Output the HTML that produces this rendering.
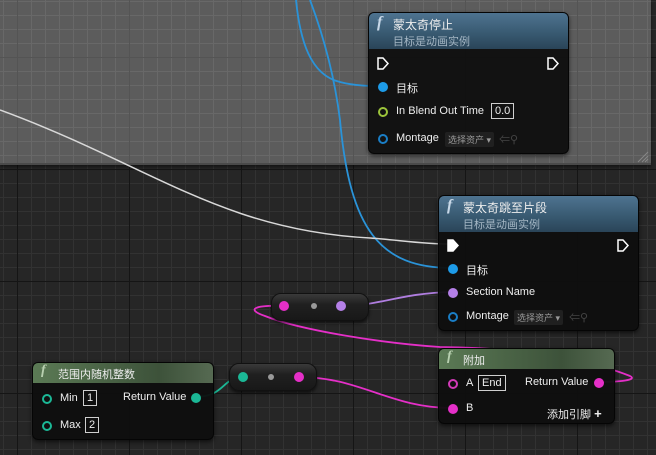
<!DOCTYPE html>
<html><head><meta charset="utf-8"><style>
*{margin:0;padding:0;box-sizing:border-box}
body{width:656px;height:455px;overflow:hidden;position:relative;background:#262626;font-family:"Liberation Sans","Noto Sans CJK SC",sans-serif;color:#e6e6e6;font-size:11px}
.grid{position:absolute;left:0;top:0;width:656px;height:455px;
background-image:linear-gradient(90deg,#151515 1px,transparent 1px),linear-gradient(#151515 1px,transparent 1px),linear-gradient(90deg,#323232 1px,transparent 1px),linear-gradient(#323232 1px,transparent 1px);
background-size:112px 112px,112px 112px,14px 14px,14px 14px;background-position:17px 57px,17px 57px,3px 1px,3px 1px}
.cmt{position:absolute;left:0;top:0;width:651px;height:165px;background-color:#5c5c5c;
background-image:linear-gradient(90deg,#545454 1px,transparent 1px),linear-gradient(#545454 1px,transparent 1px),linear-gradient(90deg,#686868 1px,transparent 1px),linear-gradient(#686868 1px,transparent 1px);
background-size:112px 112px,112px 112px,14px 14px,14px 14px;background-position:17px 57px,17px 57px,3px 1px,3px 1px;border-bottom:2px solid #4a4a4a;box-shadow:0 2px 3px rgba(0,0,0,.5)}
svg.w{position:absolute;left:0;top:0}
.node{position:absolute;background:rgba(14,14,14,.95);border-radius:6px;border:1px solid #050505;box-shadow:0 2px 4px rgba(0,0,0,.6)}
.hd{position:absolute;left:0;top:0;right:0;border-radius:5px 5px 0 0}
.blue{background:linear-gradient(180deg,#4e7390 0%,#37586f 60%,#2a4458 100%)}
.green{background:linear-gradient(90deg,#5b7a55,#3d523a 70%,#566a52)}
.t{position:absolute;white-space:nowrap;font-size:11px;color:#eee}
.sub{color:#a4b6c4;font-size:11px}
.f{position:absolute;font-family:"Liberation Serif",serif;font-style:italic;font-weight:bold;font-size:16px;color:#c8d8e8}
.pin{position:absolute;width:10px;height:10px;border-radius:50%}
.box{position:absolute;border:1px solid #cfcfcf;font-size:11px;padding:0 3px;line-height:14px;color:#eee}
.sel{position:absolute;background:#202020;color:#9a9a9a;font-size:9px;padding:1px 3px;border-radius:2px}
.rr{position:absolute;border-radius:10px;background:linear-gradient(#3a3a3a,#202020 40%,#181818);border:1px solid #111;box-shadow:0 2px 3px rgba(0,0,0,.6)}
</style></head><body>
<div class="grid"></div>
<div class="cmt"></div>
<svg class="w" width="656" height="455" viewBox="0 0 656 455">
<path d="M296 0 C300 40,310 75,340 82 C355 86,370 86,382 86" stroke="#2a93d8" stroke-width="1.8" fill="none"/>
<path d="M310 0 C325 40,335 80,340 120 C350 230,380 268,452 268" stroke="#2a93d8" stroke-width="1.8" fill="none"/>
<path d="M0 110 C150 165,220 230,370 238 C400 240,420 244,452 244" stroke="#d8d8d8" stroke-width="1.5" fill="none"/>
<path d="M341 306 C380 306,400 293,452 292" stroke="#b07ee0" stroke-width="1.8" fill="none"/>
<path d="M195 397 C225 397,222 377,243 377" stroke="#1bb896" stroke-width="1.8" fill="none"/>
<path d="M299 377 C360 377,390 408,452 408" stroke="#e52fc8" stroke-width="1.8" fill="none"/>
<path d="M598 382 C620 382,638 380,630 376 C620 372,560 348,440 347 C380 343,300 330,265 316 C245 309,255 305,284 306" stroke="#e52fc8" stroke-width="1.8" fill="none"/>
<g stroke="#888" stroke-width="1"><line x1="638" y1="162" x2="648" y2="152"/><line x1="642" y1="162" x2="648" y2="156"/><line x1="645" y1="162" x2="648" y2="159"/></g>
</svg>

<!-- Node 1 -->
<div class="node" style="left:368px;top:12px;width:201px;height:142px">
<div class="hd blue" style="height:36px"></div>
<div class="f" style="left:8px;top:1px">f</div>
<div class="t" style="left:24px;top:3px;font-size:12px">蒙太奇停止</div>
<div class="t sub" style="left:24px;top:20px">目标是动画实例</div>
<svg style="position:absolute;left:8px;top:44px" width="12" height="13"><path d="M1 1H6L11 6.5L6 12H1Z" stroke="#fff" stroke-width="1.5" fill="none"/></svg>
<svg style="position:absolute;left:178px;top:44px" width="12" height="13"><path d="M1 1H6L11 6.5L6 12H1Z" stroke="#fff" stroke-width="1.5" fill="none"/></svg>
<div class="pin" style="left:9px;top:69px;background:#1d9be8"></div>
<div class="t" style="left:27px;top:67px">目标</div>
<div class="pin" style="left:9px;top:94px;border:2px solid #9cc43b"></div>
<div class="t" style="left:27px;top:92px">In Blend Out Time</div>
<div class="box" style="left:122px;top:90px">0.0</div>
<div class="pin" style="left:9px;top:121px;border:2px solid #1a7ec6"></div>
<div class="t" style="left:27px;top:119px">Montage</div>
<div class="sel" style="left:76px;top:119px">选择资产 ▾</div>
<div class="t" style="left:130px;top:118px;color:#444">⇐⚲</div>
</div>

<!-- Node 2 -->
<div class="node" style="left:438px;top:195px;width:201px;height:136px">
<div class="hd blue" style="height:36px"></div>
<div class="f" style="left:8px;top:1px">f</div>
<div class="t" style="left:24px;top:3px;font-size:12px">蒙太奇跳至片段</div>
<div class="t sub" style="left:24px;top:20px">目标是动画实例</div>
<svg style="position:absolute;left:8px;top:43px" width="12" height="13"><path d="M1 1H6L11 6.5L6 12H1Z" stroke="#fff" stroke-width="1.5" fill="#fff"/></svg>
<svg style="position:absolute;left:178px;top:43px" width="12" height="13"><path d="M1 1H6L11 6.5L6 12H1Z" stroke="#fff" stroke-width="1.5" fill="none"/></svg>
<div class="pin" style="left:9px;top:68px;background:#1d9be8"></div>
<div class="t" style="left:27px;top:66px">目标</div>
<div class="pin" style="left:9px;top:92px;background:#b580e8"></div>
<div class="t" style="left:27px;top:90px">Section Name</div>
<div class="pin" style="left:9px;top:116px;border:2px solid #1a7ec6"></div>
<div class="t" style="left:27px;top:114px">Montage</div>
<div class="sel" style="left:75px;top:114px">选择资产 ▾</div>
<div class="t" style="left:130px;top:113px;color:#444">⇐⚲</div>
</div>

<!-- 附加 -->
<div class="node" style="left:438px;top:348px;width:177px;height:76px">
<div class="hd green" style="height:20px"></div>
<div class="f" style="left:8px;top:0px;font-size:14px;color:#b8d0b0">f</div>
<div class="t" style="left:24px;top:3px">附加</div>
<div class="pin" style="left:9px;top:30px;border:2px solid #d23ab8"></div>
<div class="t" style="left:27px;top:28px">A</div>
<div class="box" style="left:39px;top:26px">End</div>
<div class="t" style="left:86px;top:27px">Return Value</div>
<div class="pin" style="left:155px;top:29px;background:#e52fc8"></div>
<div class="pin" style="left:9px;top:55px;background:#e52fc8"></div>
<div class="t" style="left:27px;top:53px">B</div>
<div class="t" style="left:108px;top:57px">添加引脚 <b style="font-size:13px">+</b></div>
</div>

<!-- 范围内随机整数 -->
<div class="node" style="left:32px;top:362px;width:182px;height:78px">
<div class="hd green" style="height:20px"></div>
<div class="f" style="left:8px;top:0px;font-size:14px;color:#b8d0b0">f</div>
<div class="t" style="left:25px;top:3px">范围内随机整数</div>
<div class="pin" style="left:9px;top:31px;border:2px solid #1bb896"></div>
<div class="t" style="left:27px;top:29px">Min</div>
<div class="box" style="left:50px;top:27px">1</div>
<div class="t" style="left:90px;top:28px">Return Value</div>
<div class="pin" style="left:158px;top:30px;background:#1bb896"></div>
<div class="pin" style="left:9px;top:58px;border:2px solid #1bb896"></div>
<div class="t" style="left:27px;top:56px">Max</div>
<div class="box" style="left:52px;top:54px">2</div>
</div>

<!-- reroutes -->
<div class="rr" style="left:271px;top:293px;width:98px;height:28px"></div>
<div class="pin" style="left:279px;top:301px;background:#e52fc8"></div>
<div class="pin" style="left:311px;top:303px;width:6px;height:6px;background:#999"></div>
<div class="pin" style="left:336px;top:301px;background:#b580e8"></div>
<div class="rr" style="left:229px;top:363px;width:88px;height:28px"></div>
<div class="pin" style="left:238px;top:372px;background:#1bb896"></div>
<div class="pin" style="left:268px;top:374px;width:6px;height:6px;background:#999"></div>
<div class="pin" style="left:294px;top:372px;background:#e52fc8"></div>
</body></html>
